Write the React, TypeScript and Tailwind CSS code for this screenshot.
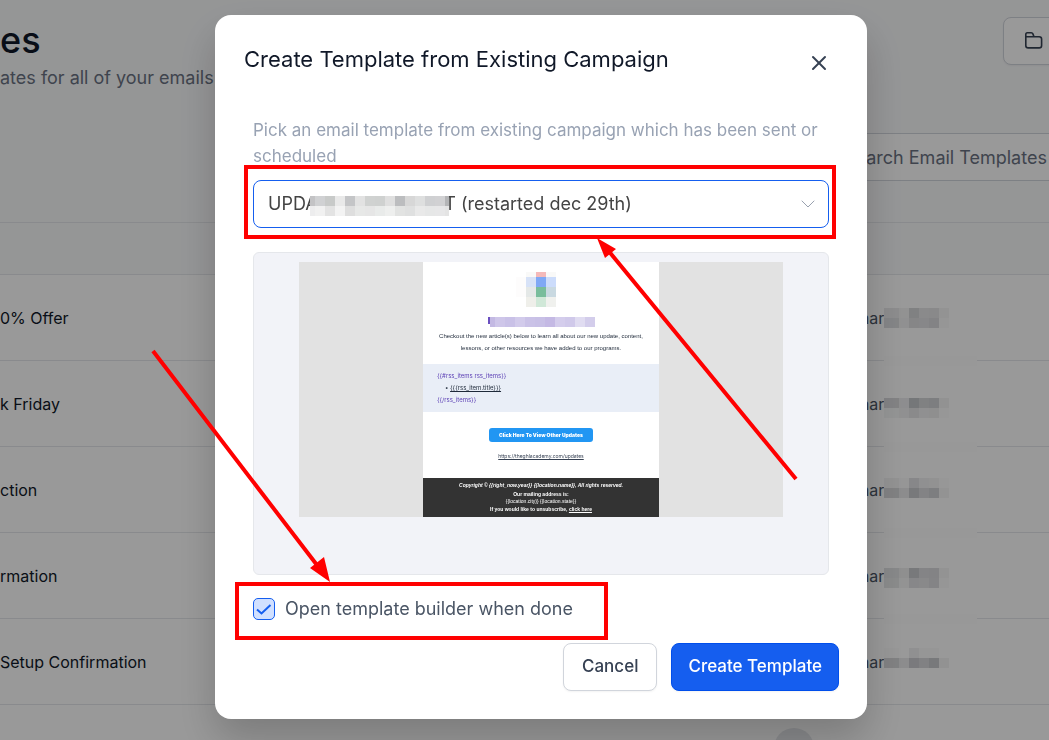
import { useState } from 'react';
import { ChevronDown, X } from 'lucide-react';

type Tile = { x: number; y: number; w: number; h: number; fill: string };

type TemplateRow = {
  name: string;
  top: number;
  shades: number[][];
  lastBorder?: boolean;
};

// opacity of each redaction tile, one list per line of tiles
const rows: TemplateRow[] = [
  { name: '0% Offer', top: 0, shades: [[0.09, 0.05, 0.17, 0.1, 0.11, 0.04], [0.14, 0.06, 0.13, 0.12, 0.15, 0.02]] },
  { name: 'k Friday', top: 4, shades: [[0.16, 0.08, 0.24, 0.17, 0.19, 0.05], [0.04, 0.06, 0.1, 0.06, 0.07, 0.01]] },
  { name: 'ction', top: -2, shades: [[0.05, 0.02, 0.12, 0.06, 0.05, 0.01], [0.17, 0.09, 0.22, 0.15, 0.19, 0.04]] },
  { name: 'rmation', top: 2, shades: [[0.12, 0.07, 0.22, 0.14, 0.15, 0.04], [0.1, 0.04, 0.12, 0.11, 0.14, 0.02]] },
  { name: 'Setup Confirmation', top: -4, lastBorder: true, shades: [[0.01, 0, 0.06, 0.02, 0.02, 0], [0.17, 0.09, 0.21, 0.16, 0.22, 0.05]] },
  { name: '', top: 0, shades: [] },
];

const tileX = [0, 15, 25, 35, 45, 55];
const tileW = [15, 10, 10, 10, 10, 10];

const selectTiles = ['#c3c3c5', '#d0d1d3', '#c8cac9', '#e9e9e9', '#c4c5c7', '#e2e2e2', '#d0d2d1', '#cfd1d0', '#dfdfdf', '#bcbdbf', '#d7d7d7', '#dedfdf', '#cfd0d2', '#d1d1d3', '#b4b5b7'];
const selectTilesLow = ['#ededee', '#f1f1f1', '#e3e3e3', '#f3f3f3', '#dedede', '#e7e8e7', '#e6e6e6', '#e9ebea', '#eeefee', '#e2e3e2', '#dfe0e0', '#e9e9e9', '#e6e7e7', '#e7e7e8', '#e4e4e4'];
const headingTiles = ['#c3b9e3', '#cec6e9', '#c9c1e7', '#d2cbeb', '#cac2e7', '#c8c0e6', '#c4b9e4', '#d4cdec', '#d0c9ea', '#e0dcf1', '#d3cdeb'];

const logoTiles: Tile[] = [
  { x: 0, y: 5, w: 10, h: 20, fill: '#fdfcfc' },
  { x: 10, y: 0, w: 30, h: 5, fill: '#f9f9f8' },
  { x: 20, y: 0, w: 10, h: 5, fill: '#f4b9b9' },
  { x: 10, y: 5, w: 10, h: 10, fill: '#d7e2f7' },
  { x: 20, y: 5, w: 10, h: 10, fill: '#7fa8f5' },
  { x: 30, y: 5, w: 10, h: 10, fill: '#ccdcfb' },
  { x: 10, y: 15, w: 10, h: 10, fill: '#e4e8e7' },
  { x: 20, y: 15, w: 10, h: 10, fill: '#79bd9c' },
  { x: 30, y: 15, w: 10, h: 10, fill: '#c9d9e1' },
  { x: 10, y: 25, w: 10, h: 10, fill: '#efefea' },
  { x: 20, y: 25, w: 10, h: 10, fill: '#d0e8d8' },
  { x: 30, y: 25, w: 10, h: 10, fill: '#f0f1ee' },
];

function OwnerMask({ row }: { row: TemplateRow }) {
  return (
    <svg className="h-5 w-[93px] shrink-0 overflow-visible" viewBox="0 0 93 20" shapeRendering="crispEdges" aria-hidden="true">
      {row.lastBorder || !row.shades.length ? null : <rect x="0" y="48" width="93" height="10" fill="#fdfdfd" />}
      <rect x="0" y={row.top} width="65" height="20" fill="#fff" />
      {row.shades.map((line, l) =>
        line.map((shade, i) => (
          <rect key={`${l}-${i}`} x={tileX[i]} y={row.top + l * 10} width={tileW[i]} height="10" fill="#0a0f20" opacity={shade} />
        )),
      )}
    </svg>
  );
}

function TemplatesPage() {
  return (
    <main className="h-screen overflow-hidden bg-gray-50">
      <header className="flex justify-between">
        <div className="pt-4">
          <h1 className="text-4xl leading-12 font-medium text-gray-900">es</h1>
          <p className="text-lg leading-7 text-gray-500">ates for all of your emails</p>
        </div>
        <div className="w-[46px] pt-[17px]">
          <button type="button" aria-label="Create folder" className="flex h-12 w-36 items-center rounded-lg border border-gray-300 bg-white px-5 text-gray-700 shadow-xs">
            <svg className="h-5 w-5" viewBox="0 0 20 20" fill="none" stroke="currentColor" strokeWidth="1.6" strokeLinejoin="round">
              <path d="M1.8 5.7h13.4a2.4 2.4 0 0 1 2.4 2.4v6.4a2.4 2.4 0 0 1-2.4 2.4h-11a2.4 2.4 0 0 1-2.4-2.4zM1.8 5.7V3.4c0-1 .5-1.6 1.5-1.6h4c.9 0 1.3.4 1.6 1.1l1.1 2.8" />
            </svg>
          </button>
        </div>
      </header>

      <div className="flex justify-end pt-[41px]">
        <input
          type="text"
          aria-label="Search email templates"
          placeholder="Search Email Templates"
          className="-mr-4 h-12 w-[260px] rounded-lg border border-gray-300 bg-white pl-[38px] text-lg placeholder:text-gray-500"
        />
      </div>

      <table className="mt-[41px] w-full table-fixed border-collapse border-t border-gray-200">
        <thead>
          <tr className="h-[52px] border-b border-gray-200">
            <th className="w-[73.8%]" aria-label="Name" />
            <th aria-label="Owner" />
          </tr>
        </thead>
        <tbody className="bg-white">
          {rows.map((row) => (
            <tr key={row.name} className="h-[86px] border-b border-gray-200">
              <td className="text-base text-gray-900">{row.name}</td>
              <td>
                <div className="flex items-center">
                  <span className="h-10 w-10 shrink-0 rounded-full bg-gray-200" />
                  <span className="w-[70px] shrink-0 text-right text-base text-gray-600">{row.shades.length ? 'mar' : ''}</span>
                  <OwnerMask row={row} />
                </div>
              </td>
            </tr>
          ))}
        </tbody>
      </table>
    </main>
  );
}

function EmailPreview() {
  return (
    <div className="mx-[45px] bg-[#e2e2e2] font-['Liberation_Sans',sans-serif]">
      <div className="mx-auto flex h-[255px] w-[236px] flex-col bg-white text-center text-[6px] leading-3 text-gray-800">
        <div className="flex h-[102px] flex-col items-center pt-[10px]">
          <svg className="h-[35px] w-[50px]" viewBox="0 0 50 35" shapeRendering="crispEdges" aria-hidden="true">
            {logoTiles.map((t, i) => (
              <rect key={i} x={t.x} y={t.y} width={t.w} height={t.h} fill={t.fill} />
            ))}
          </svg>
          <svg className="mt-[10px] h-[10px] w-[107px]" viewBox="0 0 107 10" shapeRendering="crispEdges" aria-hidden="true">
            <rect x="0" y="0" width="2" height="7" fill="#6a4fc0" />
            {headingTiles.map((fill, i) => (
              <rect key={i} x={i === 0 ? 2 : i * 10 - 3} y="0" width={i === 0 ? 5 : 10} height="10" fill={fill} />
            ))}
          </svg>
          <p className="mt-[3px] px-2">
            Checkout the new article(s) below to learn all about our new update, content,
            <br />
            lessons, or other resources we have added to our programs.
          </p>
        </div>
        <div className="h-12 bg-[#e9eef7] pt-[6px] pl-[14px] text-left font-[Inter] text-[#5b3fb5]">
          <p>{'{{#rss_items rss_items}}'}</p>
          <p className="pl-2 text-gray-800">
            •&nbsp;<span className="underline">{'{{{rss_item.title}}}'}</span>
          </p>
          <p>{'{{/rss_items}}'}</p>
        </div>
        <div className="flex h-[66px] flex-col items-center pt-4">
          <span className="h-[14px] w-[104px] rounded-[3px] bg-[#2196f3] font-[Inter] text-[5px] leading-[14px] font-black text-white">Click Here To View Other Updates</span>
          <a href="#updates" className="mt-2 font-[Inter] text-[5px] text-gray-700 underline">https://theghlacademy.com/updates</a>
        </div>
        <div className="flex-1 bg-[#333] pt-[3px] text-[5px] leading-[8px] text-white">
          <p className="font-bold italic">{'Copyright © {{right_now.year}}  {{location.name}}, All rights reserved.'}</p>
          <p className="mt-px font-bold">Our mailing address is:</p>
          <p className="leading-[6px]">{'{{location.city}} {{location.state}}'}</p>
          <p className="mt-px font-bold">
            If you would like to unsubscribe, <a href="#unsubscribe" className="underline">click here</a>
          </p>
        </div>
      </div>
    </div>
  );
}

function Annotations() {
  return (
    <svg className="pointer-events-none absolute top-0 left-0 h-px w-px overflow-visible" stroke="#f00" fill="#f00" aria-hidden="true">
      <path d="M-62 336L105 554M581 464L392 234" strokeWidth="4" />
      <path d="M115 567L95 553L109 542ZM382 223L401 234L390 243Z" stroke="none" />
    </svg>
  );
}

export default function App() {
  const [openBuilder, setOpenBuilder] = useState(true);

  return (
    <div className="font-[Inter,'Liberation_Sans',sans-serif]">
      <TemplatesPage />

      <div className="fixed inset-0 flex items-start justify-center overflow-hidden bg-black/40 pt-[15px] pl-[33px]">
        <section role="dialog" aria-labelledby="dialog-title" className="relative w-full max-w-[652px] rounded-2xl bg-white pb-7 shadow-[0_20px_40px_rgba(0,0,0,0.2)]">
          <div className="flex justify-between pt-7 pr-10 pl-[29px]">
            <h2 id="dialog-title" className="text-[22px] leading-8 text-gray-900">Create Template from Existing Campaign</h2>
            <button type="button" aria-label="Close" className="mt-2 -mr-1 h-6 w-6 shrink-0 text-gray-700">
              <X className="h-6 w-6" />
            </button>
          </div>

          <div className="px-[38px] pt-[42px]">
            <label htmlFor="campaign" className="block text-[17px] leading-[26px] text-[#98a2b3]">
              Pick an email template from existing campaign which has been sent or scheduled
            </label>

            <div className="relative mt-[11px]">
              <select id="campaign" className="block h-12 w-full appearance-none rounded-lg border border-[#155eef] bg-white px-[14px] text-lg text-[#444]">
                <option>{`UPDA${'\u00a0'.repeat(25)}T (restarted dec 29th)`}</option>
              </select>
              {/* tiles after the first are shifted left by half a tile */}
              <svg className="pointer-events-none absolute top-4 left-[57px] h-5 w-[139px]" viewBox="0 0 139 20" shapeRendering="crispEdges" aria-hidden="true">
                {selectTiles.map((fill, i) => (
                  <rect key={i} x={i === 0 ? 0 : i * 10 - 5} y="0" width="10" height="10" fill={fill} />
                ))}
                {selectTilesLow.map((fill, i) => (
                  <rect key={i} x={i === 0 ? 0 : i * 10 - 5} y="10" width="10" height="10" fill={fill} />
                ))}
              </svg>
              <ChevronDown className="pointer-events-none absolute top-3 right-[9px] h-6 w-6 text-gray-400" strokeWidth={1} />
              <div className="pointer-events-none absolute -top-[15px] -right-[7px] -bottom-[11px] -left-[9px] border-4 border-[#f00]" />
            </div>

            <div className="mt-6 h-[323px] rounded-md border border-gray-200 bg-[#f2f3f8] pt-[9px]">
              <EmailPreview />
            </div>

            <div className="relative mt-5 flex h-7 items-center">
              <label className="flex items-center gap-[10px] text-lg text-gray-600">
                <input
                  type="checkbox"
                  checked={openBuilder}
                  onChange={(e) => setOpenBuilder(e.target.checked)}
                  className="peer h-[22px] w-[22px] appearance-none rounded-[5px] border border-[#155eef] bg-[#d1e0ff]"
                />
                <svg className="pointer-events-none absolute left-[3px] hidden h-4 w-4 text-[#155eef] peer-checked:block" viewBox="0 0 16 16" fill="none" stroke="currentColor" strokeWidth="2">
                  <path d="M1 8.5l4.5 4L14.5 4" />
                </svg>
                Open template builder when done
              </label>
              <div className="pointer-events-none absolute -top-[13px] -left-[18px] h-[58px] w-[373px] border-4 border-[#f00]" />
            </div>
          </div>

          <div className="flex justify-end gap-[14px] pt-5 pr-7">
            <button type="button" className="h-12 rounded-lg border border-gray-300 bg-white px-[18px] text-[17px] font-medium text-gray-700 shadow-xs">
              Cancel
            </button>
            <button type="button" className="h-12 rounded-lg border border-[#004eeb] bg-[#155eef] px-4 text-[17px] font-medium text-white shadow-xs">
              Create Template
            </button>
          </div>

          <Annotations />
        </section>
      </div>
    </div>
  );
}
